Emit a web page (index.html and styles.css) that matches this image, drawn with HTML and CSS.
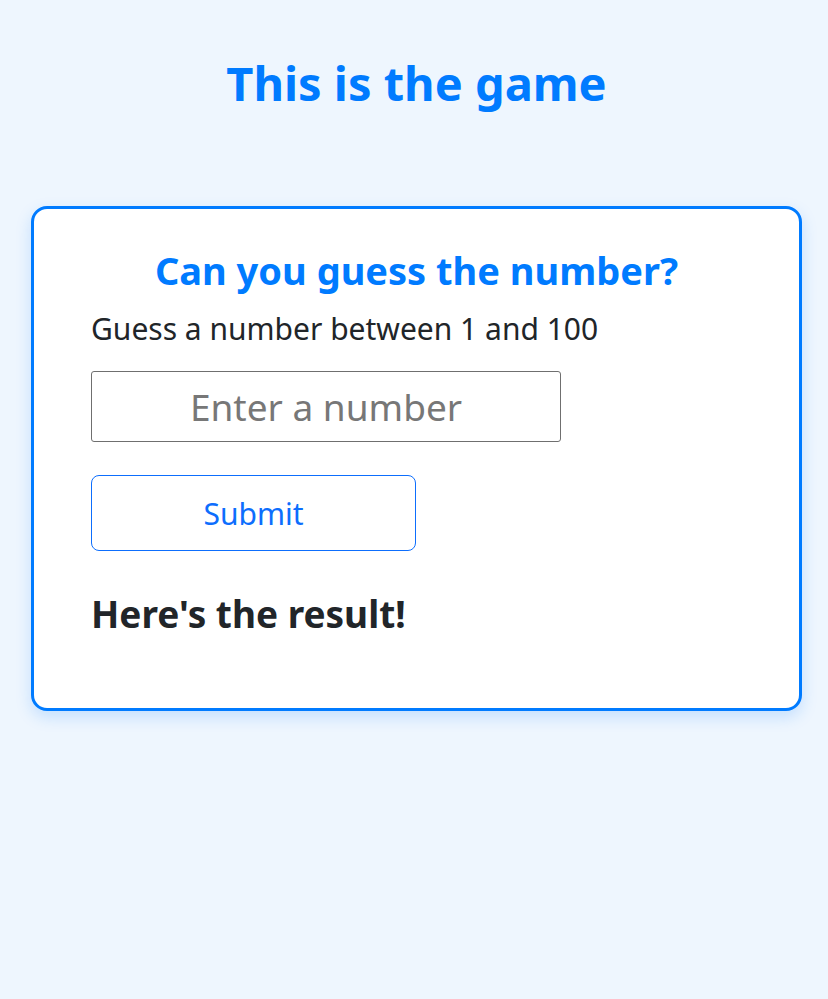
FILE: index.html
```html
<!DOCTYPE html>
<html lang="en">
<head>
<meta charset="utf-8">
<title>Guess the number</title>
<link rel="stylesheet" href="styles.css">
</head>
<body>
<main class="page">
  <h1 class="title">This is the game</h1>
  <section class="card">
    <h2 class="card-title">Can you guess the number?</h2>
    <p class="hint">Guess a number between 1 and 100</p>
    <input class="guess" type="number" placeholder="Enter a number">
    <button class="submit" type="button">Submit</button>
    <h3 class="result">Here's the result!</h3>
  </section>
</main>
</body>
</html>
```
FILE: styles.css
```css
html, body {
  margin: 0;
  padding: 0;
}
body {
  background: #eef6fe;
  font-family: "Noto Sans", "Open Sans", sans-serif;
  color: #212529;
  min-height: 999px;
}
.page {
  display: flex;
  flex-direction: column;
  align-items: center;
  padding: 0 26px 0 31px;
}
.title {
  margin: 48px 0 0;
  height: 70px;
  font-size: 47px;
  line-height: 70px;
  font-weight: 700;
  color: #007bff;
}
.card {
  box-sizing: border-box;
  align-self: stretch;
  margin-top: 88px;
  height: 505px;
  background: #fff;
  border: 3px solid #007bff;
  border-radius: 16px;
  box-shadow: 0 6px 16px rgba(0, 123, 255, 0.18);
  padding: 36px 57px 0;
  display: flex;
  flex-direction: column;
  align-items: flex-start;
}
.card-title {
  align-self: stretch;
  text-align: center;
  margin: 0;
  font-size: 38px;
  line-height: 50px;
  color: #007bff;
  font-weight: 700;
}
.hint {
  margin: 14px 0 0;
  font-size: 30px;
  line-height: 40px;
}
.guess {
  box-sizing: border-box;
  margin-top: 22px;
  width: 470px;
  height: 71px;
  border: 1px solid #6f6f6f;
  border-radius: 3px;
  font-family: inherit;
  font-size: 37px;
  text-align: center;
  color: #212529;
  background: #fff;
  padding: 0;
  -moz-appearance: textfield;
  appearance: textfield;
}
.guess::-webkit-inner-spin-button,
.guess::-webkit-outer-spin-button {
  -webkit-appearance: none;
  margin: 0;
}
.guess::placeholder {
  color: #777;
}
.submit {
  box-sizing: border-box;
  margin-top: 33px;
  width: 325px;
  height: 76px;
  background: #fff;
  border: 1.5px solid #0d6efd;
  border-radius: 8px;
  font-family: inherit;
  font-size: 30px;
  color: #0d6efd;
}
.result {
  margin: 38px 0 0;
  font-size: 37px;
  line-height: 50px;
  font-weight: 700;
}
```
